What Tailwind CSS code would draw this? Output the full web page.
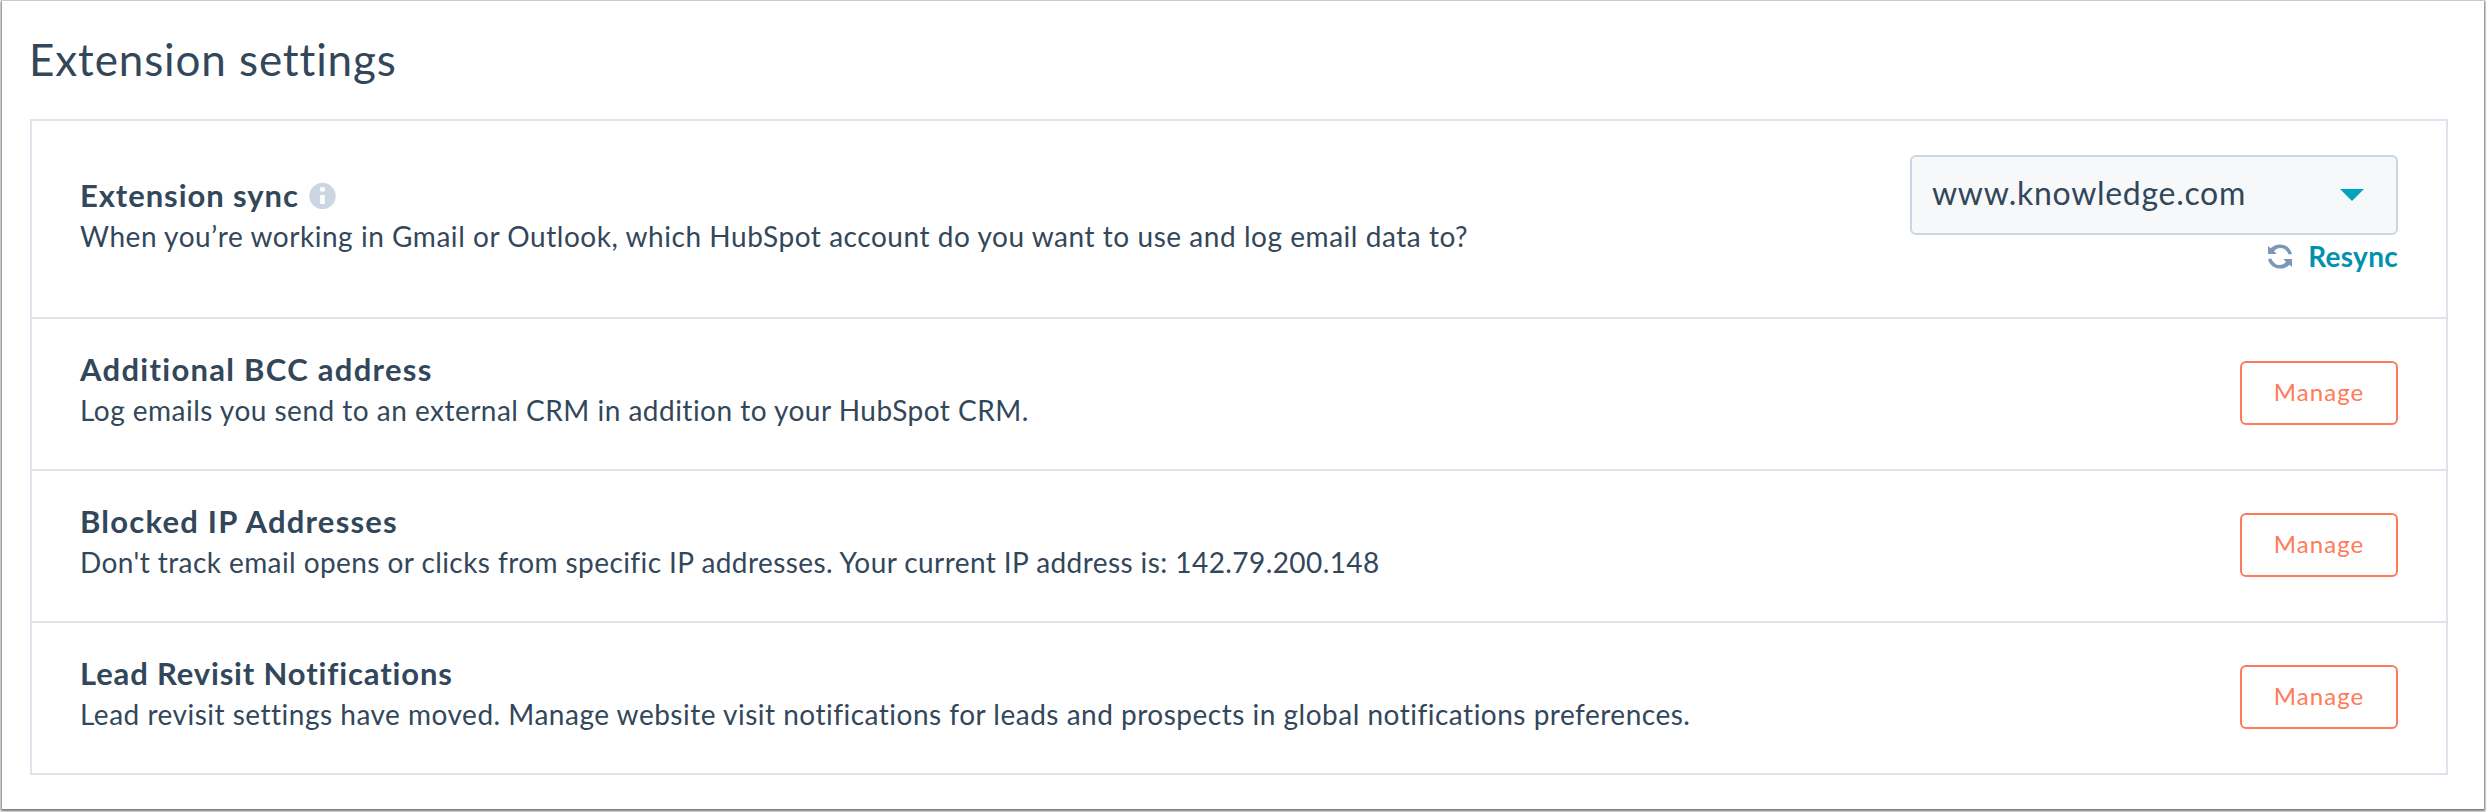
<!DOCTYPE html>
<html lang="en">
<head>
  <meta charset="UTF-8">
  <meta name="viewport" content="width=device-width, initial-scale=1.0">
  <title>Extension settings</title>
  <script src="https://cdn.jsdelivr.net/npm/@tailwindcss/browser@4"></script>
</head>
<body class="h-[812px] overflow-hidden bg-[#f0f0f0] px-0.5 pt-px font-['Lato',sans-serif] text-[#33475b]">
  <main class="h-[808px] bg-white px-7 pt-[30px] shadow-[0_1px_2px_1px_rgba(0,0,0,0.5)]">
    <h1 class="mb-8 -ml-px text-[44px] leading-[56px] tracking-[0.88px]">Extension settings</h1>

    <div class="mr-2 border-2 border-[#dfe3eb]">
      <!-- Extension sync -->
      <div class="flex h-[198px] items-start justify-between border-b-2 border-[#dfe3eb] px-12">
        <div class="pt-[54px]">
          <div class="flex items-center">
            <h2 class="text-[31px] leading-10 font-bold tracking-[0.93px]">Extension sync</h2>
            <svg class="ml-2.5 h-[27px] w-[27px]" viewBox="0 0 27 27">
              <circle cx="13.5" cy="14" r="13.2" fill="#cbd6e2" />
              <path d="M11.2 5.3h4.6v4.2h-4.6zM11.2 13h4.6v9h-4.6z" fill="#fff" />
            </svg>
          </div>
          <p class="text-[28px] leading-[42px] tracking-[0.545px]">When you’re working in Gmail or Outlook, which HubSpot account do you want to use and log email data to?</p>
        </div>
        <div class="flex flex-col items-end pt-[34px]">
          <button class="flex h-20 w-[488px] items-center justify-between rounded-md border-2 border-[#cbd6e2] bg-[#f6f8fa] pr-8 pl-5">
            <span class="pb-1 text-[32px] tracking-[0.7px]">www.knowledge.com</span>
            <svg class="h-3 w-6" viewBox="0 0 24 12">
              <path d="M0 0h24L12 12z" fill="#00a4bd" />
            </svg>
          </button>
          <a href="#" class="mt-[3px] flex items-center text-[28px] leading-9 font-bold tracking-[0.28px] text-[#0091ae]">
            <svg class="mr-4 h-[25px] w-6" viewBox="0 0 24 25">
              <path d="M0 2l2.7 2.3C8-1.8 21.5-1.3 24 10.2h-3.6C18 3.2 10.2 1.8 6 7.2L8.8 10H0z" fill="#7c98b6" />
              <path d="M24 23l-2.7-2.3C16 26.8 2.5 26.3 0 14.8h3.6C6 21.8 13.8 23.2 18 17.8L15.2 15H24z" fill="#7c98b6" />
            </svg>
            Resync
          </a>
        </div>
      </div>

      <!-- Additional BCC address -->
      <div class="flex h-[152px] items-start justify-between border-b-2 border-[#dfe3eb] px-12">
        <div class="pt-[30px]">
          <h2 class="text-[31px] leading-10 font-bold tracking-[1.29px]">Additional BCC address</h2>
          <p class="text-[28px] leading-[42px] tracking-[0.485px]">Log emails you send to an external CRM in addition to your HubSpot CRM.</p>
        </div>
        <button class="mt-[42px] h-16 w-[158px] rounded-md border-2 border-[#ff7a59] pb-0.5 text-2xl tracking-[1.1px] text-[#ff7a59]">Manage</button>
      </div>

      <!-- Blocked IP Addresses -->
      <div class="flex h-[152px] items-start justify-between border-b-2 border-[#dfe3eb] px-12">
        <div class="pt-[30px]">
          <h2 class="text-[31px] leading-10 font-bold tracking-[1.22px]">Blocked IP Addresses</h2>
          <p class="text-[28px] leading-[42px] tracking-[0.42px]">Don't track email opens or clicks from specific IP addresses. Your current IP address is: 142.79.200.148</p>
        </div>
        <button class="mt-[42px] h-16 w-[158px] rounded-md border-2 border-[#ff7a59] pb-0.5 text-2xl tracking-[1.1px] text-[#ff7a59]">Manage</button>
      </div>

      <!-- Lead Revisit Notifications -->
      <div class="flex h-[150px] items-start justify-between px-12">
        <div class="pt-[30px]">
          <h2 class="text-[31px] leading-10 font-bold tracking-[0.85px]">Lead Revisit Notifications</h2>
          <p class="text-[28px] leading-[42px] tracking-[0.5px]">Lead revisit settings have moved. Manage website visit notifications for leads and prospects in global notifications preferences.</p>
        </div>
        <button class="mt-[42px] h-16 w-[158px] rounded-md border-2 border-[#ff7a59] pb-0.5 text-2xl tracking-[1.1px] text-[#ff7a59]">Manage</button>
      </div>
    </div>
  </main>
</body>
</html>
